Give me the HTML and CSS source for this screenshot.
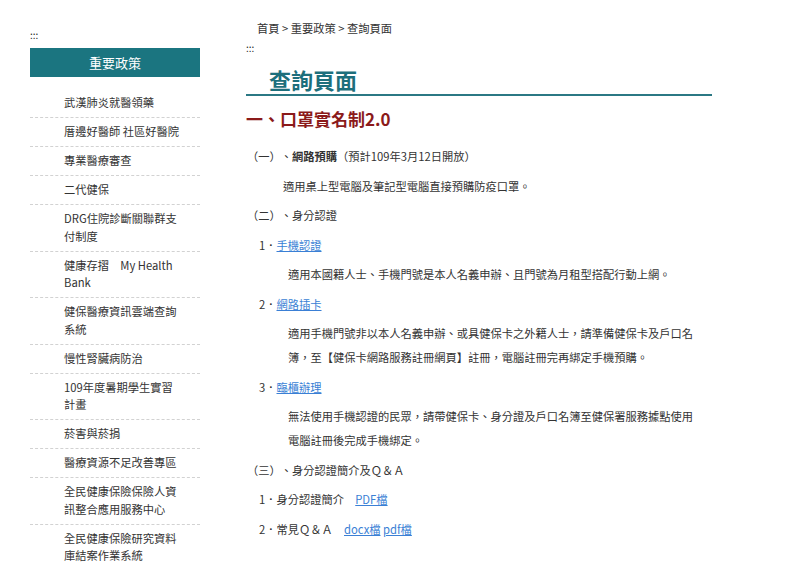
FILE: index.html
```html
<!DOCTYPE html>
<html lang="zh-Hant">
<head>
    <meta charset="UTF-8">
    <title>查詢頁面</title>
    <link rel="stylesheet" href="styles.css">
</head>

<body>
    <div class="page">
        <aside class="sidebar">
            <div class="accesskey">:::</div>
            <h2 class="side-title">重要政策</h2>
            <ul class="side-menu">
                <li>武漢肺炎就醫領藥</li>
                <li>厝邊好醫師 社區好醫院</li>
                <li>專業醫療審查</li>
                <li>二代健保</li>
                <li>DRG住院診斷關聯群支付制度</li>
                <li>健康存摺　My Health Bank</li>
                <li>健保醫療資訊雲端查詢系統</li>
                <li>慢性腎臟病防治</li>
                <li>109年度暑期學生實習計畫</li>
                <li>菸害與菸捐</li>
                <li>醫療資源不足改善專區</li>
                <li>全民健康保險保險人資訊整合應用服務中心</li>
                <li>全民健康保險研究資料庫結案作業系統</li>
            </ul>
        </aside>

        <main class="content">
            <div class="breadcrumb">首頁 &gt; 重要政策 &gt; 查詢頁面</div>
            <div class="accesskey">:::</div>
            <h1 class="page-title">查詢頁面</h1>

            <h3 class="section-title">一、口罩實名制2.0</h3>

            <p class="lv1">（一）、<b>網路預購</b>（預計109年3月12日開放）</p>
            <p class="lv1-text">適用桌上型電腦及筆記型電腦直接預購防疫口罩。</p>

            <p class="lv1">（二）、身分認證</p>
            <p class="lv2">1．<a href="#">手機認證</a></p>
            <p class="lv2-text">適用本國籍人士、手機門號是本人名義申辦、且門號為月租型搭配行動上網。</p>
            <p class="lv2">2．<a href="#">網路插卡</a></p>
            <p class="lv2-text">適用手機門號非以本人名義申辦、或具健保卡之外籍人士，請準備健保卡及戶口名簿，至【健保卡網路服務註冊網頁】註冊，電腦註冊完再綁定手機預購。</p>
            <p class="lv2">3．<a href="#">臨櫃辦理</a></p>
            <p class="lv2-text">無法使用手機認證的民眾，請帶健保卡、身分證及戶口名簿至健保署服務據點使用電腦註冊後完成手機綁定。</p>

            <p class="lv1">（三）、身分認證簡介及Ｑ＆Ａ</p>
            <p class="lv2">1．身分認證簡介　<a href="#">PDF檔</a></p>
            <p class="lv2">2．常見Ｑ＆Ａ　<a href="#">docx檔</a> <a href="#">pdf檔</a></p>
        </main>
    </div>
</body>
</html>
```

FILE: styles.css
```css
body {
    margin: 0;
    background-color: #fff;
    color: #333;
    font-family: "Noto Sans CJK TC", "Noto Sans", sans-serif;
    font-size: 11.25px;
    text-spacing-trim: space-all;
}

.page {
    display: flex;
    align-items: flex-start;
}

.accesskey {
    font-size: 10px;
    line-height: 12px;
    color: #222;
}

.sidebar {
    width: 170px;
    margin-left: 30px;
    padding-top: 29px;
}

.side-title {
    margin: 7px 0 0;
    height: 29px;
    line-height: 29px;
    background-color: #1b7580;
    color: #fff;
    font-size: 13px;
    font-weight: normal;
    text-align: center;
}

.side-menu {
    list-style: none;
    margin: 12px 0 0;
    padding: 0;
}

.side-menu li {
    padding: 5.25px 20px 5.25px 34px;
    line-height: 17.5px;
    border-bottom: 1px dashed #d2d2d2;
}

.side-menu li:last-child {
    border-bottom: none;
}

.content {
    width: 466px;
    margin-left: 46px;
    padding-top: 19px;
}

.breadcrumb {
    padding-left: 11px;
    line-height: 18px;
    margin-bottom: 5px;
}

.page-title {
    margin: 10px 0 0;
    padding-left: 23px;
    font-size: 22px;
    line-height: 30px;
    font-weight: 600;
    color: #1d6f7c;
    border-bottom: 2px solid #2b7884;
}

.section-title {
    margin: 11px 0 13px;
    font-size: 17px;
    line-height: 24px;
    font-weight: bold;
    color: #8b1a1a;
}

.content p {
    margin: 0 0 5.5px;
    line-height: 24px;
}

.content .lv1 {
    padding-left: 1px;
}

.content .lv1-text {
    padding-left: 37px;
}

.content .lv2 {
    padding-left: 13px;
}

.content .lv2-text {
    padding-left: 42px;
    padding-right: 8px;
}

.content b {
    font-weight: bold;
}

.content a {
    color: #3a7fd5;
    text-decoration: underline;
}
```
